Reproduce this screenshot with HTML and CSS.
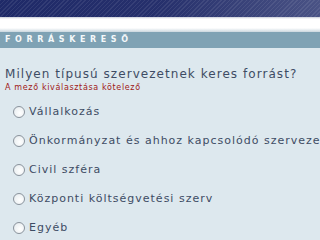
FILE: index.html
```html
<!DOCTYPE html>
<html lang="hu">
<head>
<meta charset="utf-8">
<link rel="stylesheet" href="styles.css">
</head>
<body>
<div class="top"></div>
<div class="gap"></div>
<div class="title">FORRÁSKERESŐ</div>
<div class="content">
  <p class="question">Milyen típusú szervezetnek keres forrást?</p>
  <p class="required">A mező kiválasztása kötelező</p>
  <ul class="options">
    <li><span class="radio"></span>Vállalkozás</li>
    <li><span class="radio"></span>Önkormányzat és ahhoz kapcsolódó szervezet</li>
    <li><span class="radio"></span>Civil szféra</li>
    <li><span class="radio"></span>Központi költségvetési szerv</li>
    <li><span class="radio"></span>Egyéb</li>
  </ul>
</div>
</body>
</html>
```
FILE: styles.css
```css
html, body {
  margin: 0;
  padding: 0;
  width: 320px;
  height: 240px;
  overflow: hidden;
  background: #dde8ee;
  font-family: "DejaVu Sans", Verdana, sans-serif;
}
.top {
  height: 17px;
  background:
    repeating-linear-gradient(135deg, rgba(255,255,255,0.08) 0 1px, transparent 1px 3px),
    linear-gradient(90deg, #1f2a68 0%, #26306c 50%, #4a5385 100%);
}
.gap {
  height: 15px;
  background: linear-gradient(180deg, #c8ccd8 0, #ffffff 2px, #ffffff 11px, #c9d6de 15px);
}
.title {
  height: 16px;
  background: #7fa2b4;
  color: #f4f8fa;
  font-size: 8px;
  font-weight: bold;
  letter-spacing: 4.6px;
  line-height: 16px;
  padding-left: 5px;
}
.content {
  padding: 0 0 0 5px;
  white-space: nowrap;
}
.question {
  margin: 20px 0 0;
  font-size: 12px;
  line-height: 13px;
  letter-spacing: 1.05px;
  color: #3e4c64;
}
.required {
  margin: 1px 0 0;
  font-size: 8px;
  line-height: 11px;
  letter-spacing: 0.65px;
  color: #a01818;
}
.options {
  list-style: none;
  margin: 4px 0 0;
  padding: 0 0 0 8px;
}
.options li {
  display: flex;
  align-items: center;
  height: 29px;
  font-size: 11px;
  letter-spacing: 1px;
  color: #3e4c64;
}
.radio {
  width: 10px;
  height: 10px;
  border: 1px solid #8a939c;
  border-radius: 50%;
  background: radial-gradient(circle at 60% 60%, #ffffff 0, #eef2f4 60%, #d8dee2 100%);
  margin-right: 4px;
  flex: none;
}
```
